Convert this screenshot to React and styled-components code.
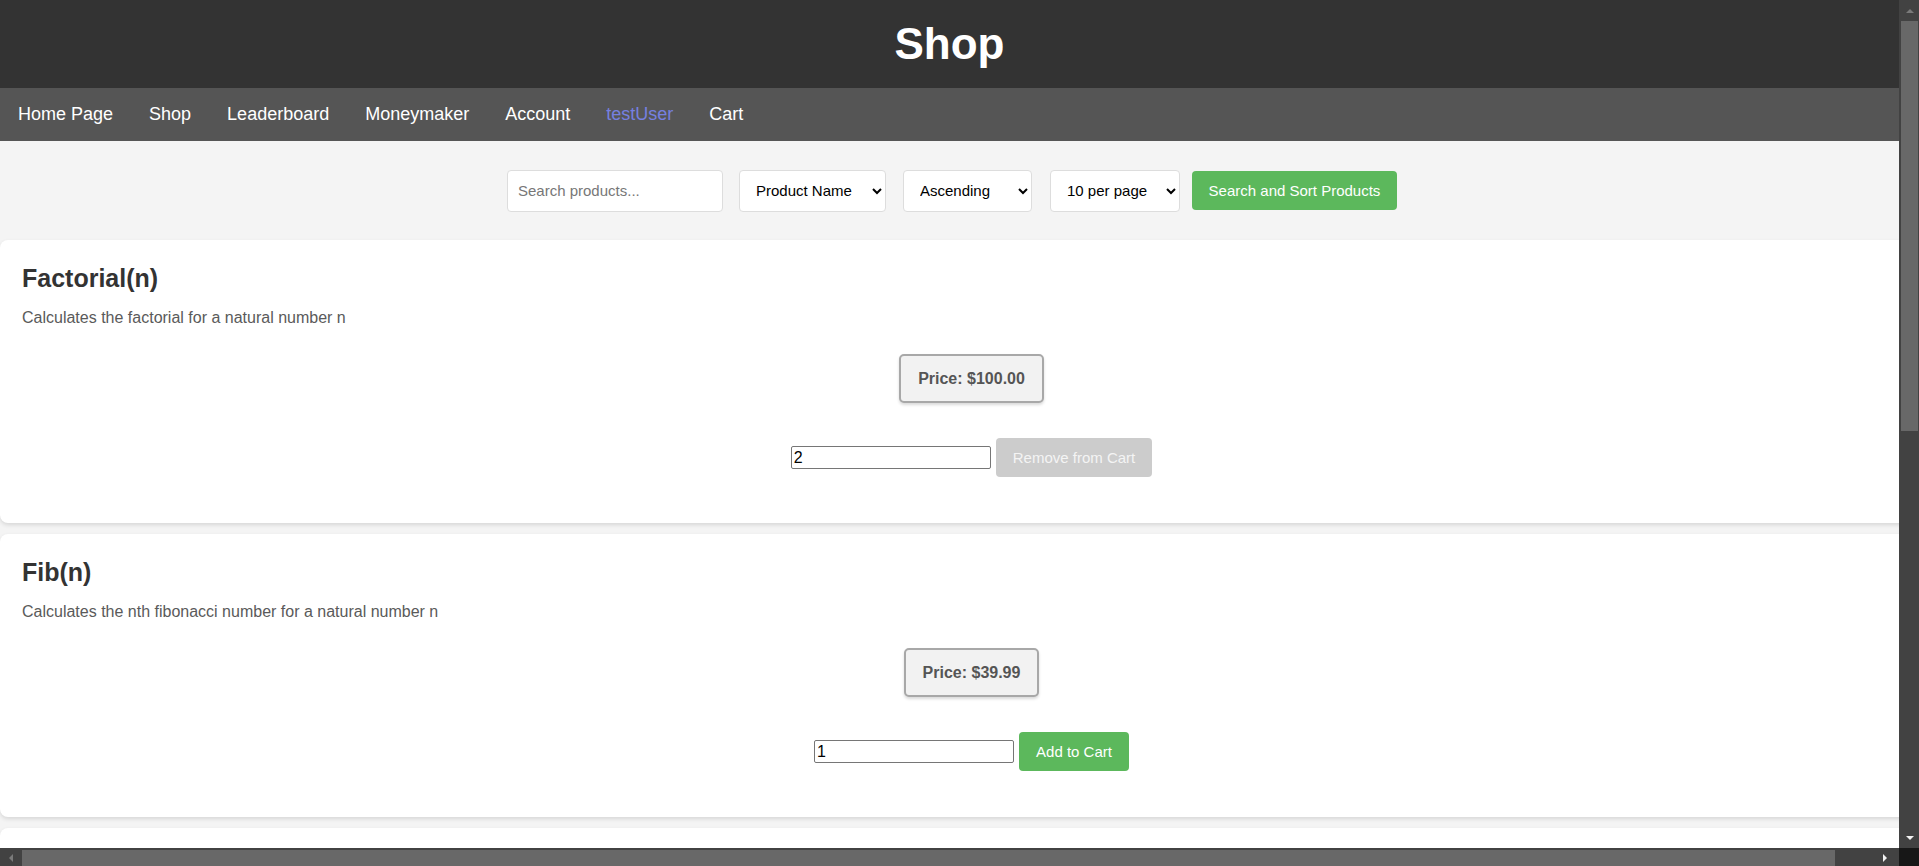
import React, { useState } from "react";
import styled, { createGlobalStyle } from "styled-components";

const GlobalStyle = createGlobalStyle`
    html, body {
        margin: 0;
        height: 100%;
        overflow: hidden;
        background: #f4f4f4;
    }
    body {
        font-family: "Liberation Sans", Arial, sans-serif;
        color: #333;
    }
    input, select, button {
        font-family: "Liberation Sans", Arial, sans-serif;
    }
`;

const products = [
    {
        id: 1,
        name: "Factorial(n)",
        description: "Calculates the factorial for a natural number n",
        price: 100,
        quantity: "2",
        inCart: true,
    },
    {
        id: 2,
        name: "Fib(n)",
        description: "Calculates the nth fibonacci number for a natural number n",
        price: 39.99,
        quantity: "1",
        inCart: false,
    },
    {
        id: 3,
        name: "IsPrime(n)",
        description: "Checks whether a natural number n is prime",
        price: 25,
        quantity: "1",
        inCart: false,
    },
];

const navLinks = ["Home Page", "Shop", "Leaderboard", "Moneymaker", "Account", "testUser", "Cart"];

// little triangles used on the window scrollbars
const Arrow = ({ dir, color }) => {
    const points = {
        up: "1,6 5,2 9,6",
        down: "1,2 5,6 9,2",
        left: "6,1 2,5 6,9",
        right: "2,1 6,5 2,9",
    }[dir];
    const vertical = dir === "up" || dir === "down";
    return (
        <svg
            width={vertical ? 10 : 8}
            height={vertical ? 8 : 10}
            viewBox={vertical ? "0 0 10 8" : "0 0 8 10"}
        >
            <polygon points={points} fill={color} />
        </svg>
    );
};

const ProductCard = ({ product }) => {
    const [qty, setQty] = useState(product.quantity);

    return (
        <Card>
            <Title>{product.name}</Title>
            <Description>{product.description}</Description>
            <PriceBox>Price: ${product.price.toFixed(2)}</PriceBox>
            <CartRow>
                <QtyInput type="text" value={qty} onChange={e => setQty(e.target.value)} />
                {product.inCart ? (
                    <CartButton $remove>Remove from Cart</CartButton>
                ) : (
                    <CartButton>Add to Cart</CartButton>
                )}
            </CartRow>
        </Card>
    );
};

const App = () => {
    const [search, setSearch] = useState("");

    return (
        <Page>
            <GlobalStyle />
            <Content>
                <Header>
                    <PageTitle>Shop</PageTitle>
                </Header>
                <Nav>
                    {navLinks.map(link => (
                        <NavLink key={link} href="#" $user={link === "testUser"}>
                            {link}
                        </NavLink>
                    ))}
                </Nav>
                <Controls onSubmit={e => e.preventDefault()}>
                    <SearchInput
                        type="text"
                        placeholder="Search products..."
                        value={search}
                        onChange={e => setSearch(e.target.value)}
                    />
                    <Select $width={147} $gap={16} defaultValue="name">
                        <option value="name">Product Name</option>
                        <option value="price">Price</option>
                    </Select>
                    <Select $width={129} $gap={17} defaultValue="asc">
                        <option value="asc">Ascending</option>
                        <option value="desc">Descending</option>
                    </Select>
                    <Select $width={130} $gap={18} defaultValue="10">
                        <option value="10">10 per page</option>
                        <option value="20">20 per page</option>
                        <option value="50">50 per page</option>
                    </Select>
                    <SubmitButton type="submit">Search and Sort Products</SubmitButton>
                </Controls>
                <main>
                    {products.map(p => (
                        <ProductCard key={p.id} product={p} />
                    ))}
                </main>
            </Content>

            <VScroll>
                <ScrollArrow $v>
                    <Arrow dir="up" color="#7a7a7a" />
                </ScrollArrow>
                <VThumb />
                <ScrollArrow $v $end>
                    <Arrow dir="down" color="#f2f2f2" />
                </ScrollArrow>
            </VScroll>
            <HScroll>
                <ScrollArrow>
                    <Arrow dir="left" color="#7a7a7a" />
                </ScrollArrow>
                <HThumb />
                <ScrollArrow $end>
                    <Arrow dir="right" color="#f2f2f2" />
                </ScrollArrow>
            </HScroll>
            <Corner />
        </Page>
    );
};

const Page = styled.div`
    display: grid;
    grid-template-columns: 1fr 20px;
    grid-template-rows: 1fr 18px;
    height: 100vh;
    background: #f4f4f4;
`;

const Content = styled.div`
    overflow: hidden;
    min-width: 0;
    min-height: 0;
`;

const VScroll = styled.div`
    display: flex;
    flex-direction: column;
    background: #424242;
    padding: 0 1px 0 2px;
`;

const HScroll = styled.div`
    display: flex;
    align-items: stretch;
    background: #424242;
    padding: 2px 0 0;
`;

const ScrollArrow = styled.div`
    display: flex;
    align-items: center;
    justify-content: center;
    flex: 0 0 ${({ $v }) => ($v ? "21px" : "22px")};
    margin-${({ $v }) => ($v ? "top" : "left")}: ${({ $end }) => ($end ? "auto" : "0")};
    ${({ $end, $v }) => ($end && !$v ? "flex-basis: 40px; justify-content: flex-end; padding-right: 10px;" : "")}
`;

const VThumb = styled.div`
    height: 410px;
    background: #686868;
`;

const HThumb = styled.div`
    width: 1813px;
    background: #686868;
`;

const Corner = styled.div`
    background: #171717;
`;

const Header = styled.header`
    background: #333;
    padding: 19px 0;
    text-align: center;
`;

const PageTitle = styled.h1`
    margin: 0;
    color: #fff;
    font-size: 44px;
    line-height: 50px;
    font-weight: bold;
`;

const Nav = styled.nav`
    display: flex;
    align-items: center;
    gap: 36px;
    height: 53px;
    padding-left: 18px;
    background: #555;
`;

const NavLink = styled.a`
    color: ${({ $user }) => ($user ? "#7680e0" : "#fff")};
    font-size: 18px;
    text-decoration: none;
`;

const Controls = styled.form`
    display: flex;
    justify-content: center;
    align-items: center;
    height: 99px;
    margin: 0;
    padding-left: 5px;
`;

const SearchInput = styled.input`
    box-sizing: border-box;
    width: 216px;
    height: 42px;
    padding: 0 10px;
    border: 1px solid #ddd;
    border-radius: 4px;
    background: #fff;
    font-size: 15px;
    color: #333;
    &::placeholder {
        color: #777;
    }
`;

const Select = styled.select`
    box-sizing: border-box;
    width: ${({ $width }) => $width}px;
    height: 42px;
    margin-left: ${({ $gap }) => $gap}px;
    padding: 0 8px 0 12px;
    border: 1px solid #ddd;
    border-radius: 4px;
    background: #fff;
    color: #000;
    font-size: 15px;
`;

const SubmitButton = styled.button`
    box-sizing: border-box;
    width: 205px;
    height: 39px;
    margin-left: 12px;
    border: none;
    border-radius: 4px;
    background: #5cb85c;
    color: #fff;
    font-size: 15px;
    cursor: pointer;
`;

const Card = styled.section`
    width: 100%;
    padding: 20px 22px 46px;
    margin-bottom: 11px;
    background: #fff;
    border-radius: 8px;
    box-shadow: 0 2px 4px rgba(0, 0, 0, 0.12);
`;

const Title = styled.h2`
    margin: 4px 0 0;
    font-size: 25px;
    line-height: 28.6px;
    font-weight: bold;
    color: #333;
`;

const Description = styled.p`
    margin: 16px 0 0;
    font-size: 16px;
    line-height: 18.4px;
    color: #5a5a5a;
`;

const PriceBox = styled.div`
    width: fit-content;
    margin: 27px auto 0;
    padding: 13px 17px;
    border: 2px solid #a8a8a8;
    border-radius: 5px;
    background: #f2f2f2;
    box-shadow: 0 2px 3px rgba(0, 0, 0, 0.15);
    font-size: 16px;
    line-height: 19px;
    font-weight: bold;
    color: #555;
`;

const CartRow = styled.div`
    display: flex;
    justify-content: center;
    align-items: center;
    gap: 5px;
    margin-top: 35px;
`;

const QtyInput = styled.input`
    box-sizing: border-box;
    width: 200px;
    height: 23px;
    padding: 1px 2px;
    border: 1px solid #767676;
    border-radius: 2px;
    background: #fff;
    color: #000;
    font-size: 16px;
`;

const CartButton = styled.button`
    padding: 11px 17px;
    border: none;
    border-radius: 4px;
    background: ${({ $remove }) => ($remove ? "#ccc" : "#5cb85c")};
    color: ${({ $remove }) => ($remove ? "#f4f4f4" : "#fff")};
    font-size: 15px;
    line-height: 17px;
    cursor: pointer;
`;

export default App;
